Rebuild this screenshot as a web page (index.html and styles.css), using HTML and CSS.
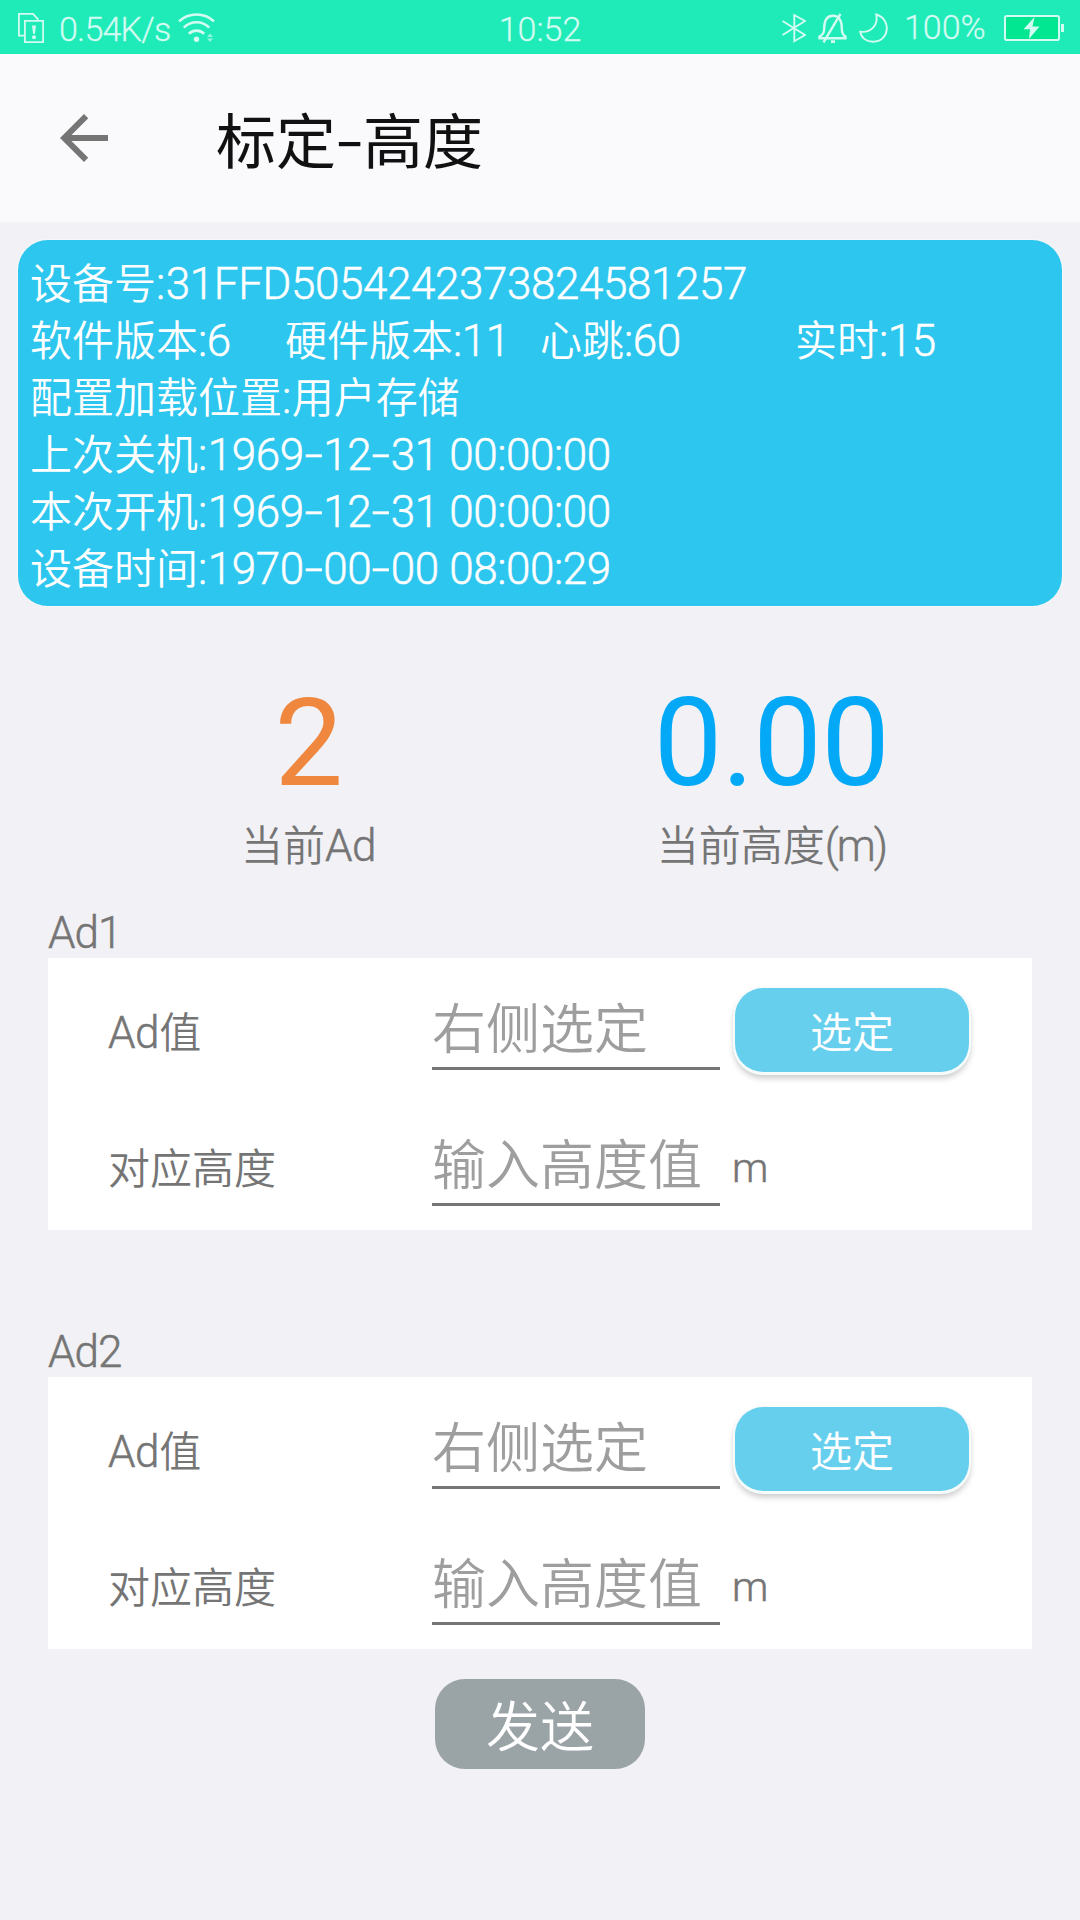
FILE: index.html
```html
<!DOCTYPE html>
<html lang="zh-CN">
<head>
<meta charset="utf-8">
<title>标定-高度</title>
<link rel="stylesheet" href="styles.css">
</head>
<body>
<header class="status">
  <div class="status-left">
    <svg class="ic-sim" width="26" height="30" viewBox="0 0 26 30" fill="none" stroke="currentColor" stroke-width="1.8">
      <path d="M6 22.6H.9V.9H15l4.6 5V7"/>
      <path d="M6.9 7.9h18.2v21.2H6.9z"/>
      <path d="M14 12.500h4l-1.100 8.300h-1.800z" fill="currentColor" stroke="none"/>
      <circle cx="16" cy="24.300" r="2" fill="currentColor" stroke="none"/>
    </svg>
    <span class="speed">0.54K/s</span>
    <svg class="ic-wifi" width="37" height="30" viewBox="0 0 37 30" fill="none" stroke="currentColor" stroke-width="2.6">
      <path d="M1 8.4C10.500-.8 26.500-.8 36 8.400"/>
      <path d="M5.800 14.600c7-7.200 18.400-7.200 25.400 0"/>
      <path d="M10.800 20.800c4.600-4.200 10.800-4.200 15.400 0"/>
      <circle cx="18.500" cy="26.300" r="2.700" fill="currentColor" stroke="none"/>
      <path d="M32 20.600l3 3.400h-6zM32 29l3-3.400h-6z" fill="currentColor" stroke="none" opacity=".65"/>
    </svg>
  </div>
  <span class="clock">10:52</span>
  <div class="status-right">
    <svg width="24" height="30" viewBox="0 0 24 30" fill="none" stroke="currentColor" stroke-width="1.9">
      <path d="M.5 8L23 22 12.300 28.200V2L23 8 .5 22"/>
    </svg>
    <svg class="ic-bell" width="29" height="30" viewBox="0 0 29 30" fill="none" stroke="currentColor" stroke-width="2.400">
      <path d="M1.500 25.200h26v-1.600c-3-1.800-3.700-4-3.700-8.200 0-7.500-2.300-12.600-8.800-12.600S6.200 8 6.200 15.400c0 4.200-1.200 6.400-4.700 8.200z"/>
      <path d="M22.500.8L5.500 29.400"/>
      <path d="M13 28.600h4" stroke-width="2.800"/>
    </svg>
    <svg class="ic-moon" width="29" height="30" viewBox="0 0 29 30" fill="none" stroke="currentColor" stroke-width="1.900">
      <path d="M17.200 1.500C33 6 30.500 28.800 14 28.700 7 28.700 2 24.500 1.200 18.700 12 20 19.500 12 17.200 1.500z"/>
    </svg>
    <span class="percent">100%</span>
    <svg class="ic-batt" width="60" height="26" viewBox="0 0 60 26">
      <rect x="1" y="1" width="54" height="24" rx="1.800" fill="#00e691" stroke="currentColor" stroke-width="2"/>
      <path d="M57 9h3v8h-3z" fill="currentColor"/>
      <path d="M30.500 2L19.500 14.300h6.500L25 24 35.500 11.600H28.500z" fill="currentColor"/>
    </svg>
  </div>
</header>

<nav class="appbar">
  <svg class="back" width="72" height="72" viewBox="0 0 24 24" fill="#757575"><path d="M20 11H7.830l5.590-5.590L12 4l-8 8 8 8 1.410-1.410L7.830 13H20v-2z"/></svg>
  <h1 class="title">标定<span class="dash">-</span>高度</h1>
</nav>

<main>
  <section class="device">
    <p>设备号<span class="n"><b>:</b>31FFD5054242373824581257</span></p>
    <div class="versions">
      <p>软件版本<span class="n">:6</span></p>
      <p>硬件版本<span class="n">:11</span></p>
      <p>心跳<span class="n">:60</span></p>
      <p>实时<span class="n">:15</span></p>
    </div>
    <p>配置加载位置<span class="n"><b>:</b></span>用户存储</p>
    <p>上次关机<span class="n"><b>:</b>1969<i>-</i>12<i>-</i>31 00:00:00</span></p>
    <p>本次开机<span class="n"><b>:</b>1969<i>-</i>12<i>-</i>31 00:00:00</span></p>
    <p>设备时间<span class="n"><b>:</b>1970<i>-</i>00<i>-</i>00 08:00:29</span></p>
  </section>

  <section class="readings">
    <div class="reading">
      <div class="value orange">2</div>
      <div class="caption">当前<span class="n">Ad</span></div>
    </div>
    <div class="reading">
      <div class="value blue">0.00</div>
      <div class="caption">当前高度<span class="n metre">(m)</span></div>
    </div>
  </section>

  <section class="group">
    <h2 class="heading">Ad1</h2>
    <div class="panel">
      <div class="row">
        <label class="label"><span class="n">Ad</span>值</label>
        <div class="field">右侧选定</div>
        <button class="pick">选定</button>
      </div>
      <div class="row">
        <label class="label">对应高度</label>
        <div class="field">输入高度值</div>
        <span class="unit">m</span>
      </div>
    </div>
  </section>

  <section class="group">
    <h2 class="heading">Ad2</h2>
    <div class="panel">
      <div class="row">
        <label class="label"><span class="n">Ad</span>值</label>
        <div class="field">右侧选定</div>
        <button class="pick">选定</button>
      </div>
      <div class="row">
        <label class="label">对应高度</label>
        <div class="field">输入高度值</div>
        <span class="unit">m</span>
      </div>
    </div>
  </section>

  <button class="send">发送</button>
</main>
</body>
</html>
```
FILE: styles.css
```css
* { box-sizing: border-box; margin: 0; padding: 0; }

body {
  width: 1080px;
  height: 1920px;
  overflow: hidden;
  background: #f1f1f6;
  color: #757575;
  font: 350 42px/57px "Noto Sans CJK SC", sans-serif;
}

svg { display: block; flex: none; }
button { border: 0; font: inherit; color: #fff; }

/* Latin letters and digits set beside Chinese text */
.n { font-family: Roboto, sans-serif; font-size: 44px; line-height: 1; letter-spacing: -0.4px; word-spacing: 0; }
.n, .heading, .unit { -webkit-text-stroke: 0.5px currentColor; }
.speed, .clock, .percent { -webkit-text-stroke: 0.3px currentColor; }
.n i { display: inline-block; width: 19.5px; font-style: normal; transform: scaleX(1.5); text-align: center; }
.n b { font-weight: inherit; letter-spacing: 0.5px; }
.n.metre { letter-spacing: -2px; }

/* status bar */
.status {
  display: grid;
  grid-template-columns: 1fr auto 1fr;
  height: 54px;
  padding: 0 16px 0 18px;
  background: #1eebb8;
  color: #d2fbf1;
  font: 350 34px/54px Roboto, sans-serif;
}
.status-left, .status-right { display: flex; align-items: center; }
.status-right { justify-content: flex-end; }
.speed { width: 113px; margin-left: 15px; padding-top: 1px; letter-spacing: -0.8px; }
.ic-wifi { margin-left: 6px; }
.clock { padding-top: 2px; margin-left: -2px; }
.ic-bell { margin-left: 12px; }
.ic-moon { margin-left: 12px; }
.percent { margin-left: 16px; width: 84px; margin-top: -2px; white-space: nowrap; }
.ic-batt { margin-left: 16px; }

/* app bar */
.appbar {
  display: flex;
  align-items: center;
  height: 168px;
  padding-left: 48px;
  background: #fafafc;
}
.title { margin-left: 96px; color: #111; font-size: 60px; font-weight: 400; line-height: 84px; }
.dash { display: inline-block; width: 27px; text-align: center; transform: translateY(-3px) scaleX(1.4); }

/* device card */
.device {
  height: 366px;
  margin: 18px 18px 0;
  padding: 12px;
  border-radius: 30px;
  background: #2dc6ee;
  box-shadow: 0 0 0 1px #f5f8f8;
  color: #fff;
}
.device p { height: 57px; white-space: nowrap; }
.versions { display: grid; grid-template-columns: repeat(4, 255px); }

/* live readings */
.readings {
  display: grid;
  grid-template-columns: 4fr 2fr 1fr;
  margin-top: 66px;
  text-align: center;
}
.value { height: 142px; font: 400 122px/144px Roboto, sans-serif; letter-spacing: -0.6px; }
.orange { color: #ef873f; }
.blue { color: #03a9f7; }
.caption { height: 57px; white-space: nowrap; }

/* calibration groups */
.group { width: 984px; margin: 30px auto 0; }
.group + .group { margin-top: 90px; }
.heading { height: 57px; padding-top: 4px; font: 350 44px/57px Roboto, sans-serif; letter-spacing: -1px; }
.panel { height: 272px; background: #fff; }
.row { display: flex; height: 136px; padding-left: 60px; }
.label { width: 324px; padding-top: 43px; }
.field {
  width: 288px;
  height: 84px;
  margin-top: 28px;
  border-bottom: 3px solid #757575;
  color: #9e9e9e;
  font-size: 54px;
  line-height: 80px;
  white-space: nowrap;
}
.pick {
  width: 234px;
  height: 84px;
  margin: 30px 0 0 15px;
  border-radius: 28px;
  background: #67cfee;
  box-shadow: 0 1px 0 2px #f6fbfc, 0 5px 6px 1px rgba(0, 0, 0, .22);
  line-height: 82px;
}
.unit { margin: 46px 0 0 12px; font: 350 41px/57px Roboto, sans-serif; }

.send {
  display: block;
  width: 210px;
  height: 90px;
  margin: 30px auto 0;
  border-radius: 30px;
  background: #9aa3a6;
  font-size: 54px;
  line-height: 90px;
}
```
